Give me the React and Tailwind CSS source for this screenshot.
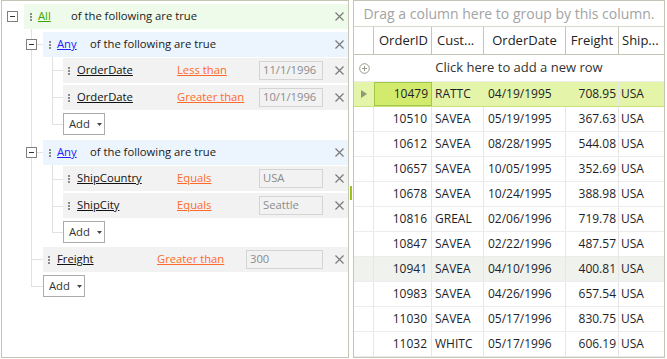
import React from 'react';

const orders = [
  { id: 10479, cust: 'RATTC', date: '04/19/1995', freight: '708.95', ship: 'USA' },
  { id: 10510, cust: 'SAVEA', date: '05/19/1995', freight: '367.63', ship: 'USA' },
  { id: 10612, cust: 'SAVEA', date: '08/28/1995', freight: '544.08', ship: 'USA' },
  { id: 10657, cust: 'SAVEA', date: '10/05/1995', freight: '352.69', ship: 'USA' },
  { id: 10678, cust: 'SAVEA', date: '10/24/1995', freight: '388.98', ship: 'USA' },
  { id: 10816, cust: 'GREAL', date: '02/06/1996', freight: '719.78', ship: 'USA' },
  { id: 10847, cust: 'SAVEA', date: '02/22/1996', freight: '487.57', ship: 'USA' },
  { id: 10941, cust: 'SAVEA', date: '04/10/1996', freight: '400.81', ship: 'USA' },
  { id: 10983, cust: 'SAVEA', date: '04/26/1996', freight: '657.54', ship: 'USA' },
  { id: 11030, cust: 'SAVEA', date: '05/17/1996', freight: '830.75', ship: 'USA' },
  { id: 11032, cust: 'WHITC', date: '05/17/1996', freight: '606.19', ship: 'USA' },
];

const Dots = () => (
  <div className="flex flex-col gap-[1px] shrink-0">
    <span className="w-[2px] h-[2px] bg-[#8a8a8a]" />
    <span className="w-[2px] h-[2px] bg-[#8a8a8a]" />
    <span className="w-[2px] h-[2px] bg-[#8a8a8a]" />
  </div>
);

const Close = () => (
  <svg width="9" height="9" viewBox="0 0 9 9" className="shrink-0 ml-auto mr-[4px]">
    <path d="M0.5 0.5 L8.5 8.5 M8.5 0.5 L0.5 8.5" stroke="#7a7a7a" strokeWidth="1.2" />
  </svg>
);

const Expander = () => (
  <div className="w-[11px] h-[11px] border border-[#808080] bg-white flex items-center justify-center shrink-0">
    <span className="w-[5px] h-[1px] bg-[#333]" />
  </div>
);

const GroupRow = ({ gutter, expLeft, bg, label, labelColor }) => (
  <div className="flex h-[25px]">
    <div className={`${gutter} flex items-center shrink-0`}>
      <div className={expLeft}>
        <Expander />
      </div>
    </div>
    <div className={`flex-1 flex items-center pl-[6px] ${bg}`}>
      <Dots />
      <div className="w-[33px] ml-[6px] shrink-0">
        <span className={`underline ${labelColor}`}>{label}</span>
      </div>
      <span className="text-[#1a1a1a]">of the following are true</span>
      <Close />
    </div>
  </div>
);

const CondRow = ({ gutter, field, op, value, boxW, opW, mt }) => (
  <div className={`flex h-[25px] ${mt}`}>
    <div className={`${gutter} shrink-0`} />
    <div className="flex-1 flex items-center pl-[5px] bg-[#f2f2f2]">
      <Dots />
      <div className="w-[100px] ml-[7px] shrink-0">
        <span className="underline text-[#111]">{field}</span>
      </div>
      <div className={`${opW} shrink-0`}>
        <span className="underline text-[#ff6a2a]">{op}</span>
      </div>
      <div className={`${boxW} h-[19px] ml-auto border border-[#d4d4d4] flex items-center px-[3px] text-[#8c8c8c]`}>
        {value}
      </div>
      <div className="w-[25px] flex items-center justify-end">
        <Close />
      </div>
    </div>
  </div>
);

const AddButton = ({ gutter, mt }) => (
  <div className={`flex ${mt}`}>
    <div className={`${gutter} shrink-0`} />
    <div className="w-[42px] h-[22px] border border-[#ababab] bg-white flex items-center pl-[5px] text-[#333]">
      <span>Add</span>
      <svg width="5" height="3" viewBox="0 0 5 3" className="ml-[7px]">
        <path d="M0 0 H5 L2.5 3 Z" fill="#444" />
      </svg>
    </div>
  </div>
);

const TreeLines = () => (
  <svg width="350" height="359" className="absolute left-[-2px] top-[-1px] pointer-events-none">
    <g stroke="#e1e1e1" strokeWidth="1" shapeRendering="crispEdges">
      <path d="M31.5 29 V286.5" />
      <path d="M36 44.5 H43" />
      <path d="M31 259.5 H43" />
      <path d="M31 286.5 H43" />
      <path d="M52.5 57 V124.5" />
      <path d="M52 70.5 H63" />
      <path d="M52 97.5 H63" />
      <path d="M52 124.5 H63" />
      <path d="M36 152.5 H43" />
      <path d="M52.5 164 V232.5" />
      <path d="M52 179.5 H63" />
      <path d="M52 206.5 H63" />
      <path d="M52 232.5 H63" />
    </g>
  </svg>
);

const FilterPanel = () => (
  <div className="relative ml-[1px] w-[348px] h-[358px] border border-[#c5c5b5] bg-white text-[11.25px] overflow-hidden">
    <TreeLines />
    <div className="relative pt-[3px]">
      <GroupRow gutter="w-[22px]" expLeft="ml-[5px]" bg="bg-[#effbea]" label="All" labelColor="text-[#3aa800]" />
      <div className="mt-[3px]">
        <GroupRow gutter="w-[41px]" expLeft="ml-[24px]" bg="bg-[#ecf4fd]" label="Any" labelColor="text-[#2222ff]" />
      </div>
      <CondRow gutter="w-[61px]" mt="mt-[1px]" field="OrderDate" op="Less than" value="11/1/1996" boxW="w-[64px]" opW="w-[80px]" />
      <CondRow gutter="w-[61px]" mt="mt-[2px]" field="OrderDate" op="Greater than" value="10/1/1996" boxW="w-[64px]" opW="w-[80px]" />
      <AddButton gutter="w-[61px]" mt="mt-[3px]" />
      <div className="mt-[5px]">
        <GroupRow gutter="w-[41px]" expLeft="ml-[24px]" bg="bg-[#ecf4fd]" label="Any" labelColor="text-[#2222ff]" />
      </div>
      <CondRow gutter="w-[61px]" mt="mt-[1px]" field="ShipCountry" op="Equals" value="USA" boxW="w-[64px]" opW="w-[80px]" />
      <CondRow gutter="w-[61px]" mt="mt-[2px]" field="ShipCity" op="Equals" value="Seattle" boxW="w-[64px]" opW="w-[80px]" />
      <AddButton gutter="w-[61px]" mt="mt-[3px]" />
      <CondRow gutter="w-[41px]" mt="mt-[4px]" field="Freight" op="Greater than" value="300" boxW="w-[77px]" opW="w-[88px]" />
      <AddButton gutter="w-[41px]" mt="mt-[3px]" />
    </div>
  </div>
);

const cols = 'grid grid-cols-[20px_58px_52px_82px_53px_45px]';

const OrdersGrid = () => (
  <div className="w-[312px] h-[358px] border border-[#c5c5b5] bg-white text-[12px] text-[#1e1e2a] overflow-hidden">
    <div className="h-[26px] border-b border-[#d8d8cc] flex items-center justify-center text-[14px] text-[#a3a3a3]">
      Drag a column here to group by this column.
    </div>
    <div className={`${cols} h-[28px] border-b border-[#c5c5b5] text-[13px] text-[#222]`}>
      <div className="border-r border-[#c5c5b5]" />
      <div className="border-r border-[#c5c5b5] flex items-center pl-[5px]">OrderID</div>
      <div className="border-r border-[#c5c5b5] flex items-center pl-[5px]">Cust...</div>
      <div className="border-r border-[#c5c5b5] flex items-center justify-center">OrderDate</div>
      <div className="border-r border-[#c5c5b5] flex items-center justify-center">Freight</div>
      <div className="flex items-center pl-[3px]">Ship...</div>
    </div>
    <div className="h-[27px] flex items-center border-b border-[#ececec]">
      <div className="w-[20px] flex items-center justify-center">
        <svg width="11" height="11" viewBox="0 0 11 11">
          <circle cx="5.5" cy="5.5" r="4.8" fill="none" stroke="#9a9a8c" strokeWidth="1" />
          <path d="M5.5 3 V8 M3 5.5 H8" stroke="#9a9a8c" strokeWidth="1" />
        </svg>
      </div>
      <div className="flex-1 text-center text-[13px] text-[#333]">Click here to add a new row</div>
    </div>
    {orders.map((o, i) => {
      const selected = i === 0;
      const hover = i === 7;
      const rowBg = selected ? 'bg-[#e4f4a8] border-[#c9e27a]' : hover ? 'bg-[#f0f2ee] border-[#ececec]' : 'bg-white border-[#ececec]';
      return (
        <div key={o.id} className={`${cols} h-[25px] border-b ${rowBg}`}>
          <div className="border-r border-[#e6e6e6] flex items-center justify-center">
            {selected && (
              <svg width="6" height="8" viewBox="0 0 6 8">
                <path d="M0 0 L6 4 L0 8 Z" fill="#8d9a72" />
              </svg>
            )}
          </div>
          <div className={selected ? 'border border-[#a2c84a] bg-[#d3eb6d] flex items-center justify-end pr-[3px]' : 'border-r border-[#e6e6e6] flex items-center justify-end pr-[4px]'}>
            {o.id}
          </div>
          <div className="border-r border-[#e6e6e6] flex items-center pl-[3px]">{o.cust}</div>
          <div className="border-r border-[#e6e6e6] flex items-center pl-[4px]">{o.date}</div>
          <div className="border-r border-[#e6e6e6] flex items-center justify-end pr-[2px]">{o.freight}</div>
          <div className="flex items-center pl-[2px]">{o.ship}</div>
        </div>
      );
    })}
  </div>
);

export default function App() {
  return (
    <div className="w-[667px] h-[359px] bg-white flex font-['Open_Sans',sans-serif]">
      <FilterPanel />
      <div className="w-[4px] flex items-start shrink-0">
        <span className="ml-[1px] mt-[186px] w-[2px] h-[14px] bg-[#9bc31a]" />
      </div>
      <OrdersGrid />
    </div>
  );
}
